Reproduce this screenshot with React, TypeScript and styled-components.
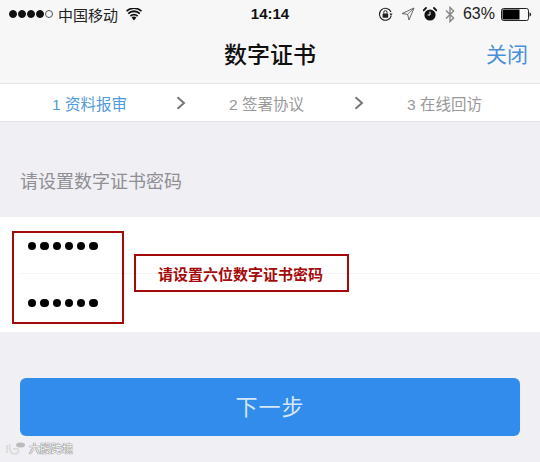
import React from "react";
import styled, { createGlobalStyle } from "styled-components";

const Global = createGlobalStyle`
  html, body { margin: 0; padding: 0; }
  body { width: 540px; height: 462px; overflow: hidden; background: #efeff4; font-family: "Liberation Sans", "Noto Sans CJK SC", sans-serif; }
`;
const Page = styled.div`
  position: relative; width: 540px; height: 462px; background: #efeff4; overflow: hidden;
  display: flex; flex-direction: column;
`;
const Header = styled.header`
  height: 83px; background: #f7f7f8; border-bottom: 1px solid #e4e4e6; display: flex; flex-direction: column; flex: none;
`;
const StatusBar = styled.div`
  position: relative; height: 28px; display: flex; align-items: center; justify-content: space-between;
  padding: 0 8px 0 9px; font-size: 15px; color: #222; flex: none;
`;
const StatusLeft = styled.div`display: flex; align-items: center;`;
const StatusRight = styled.div`display: flex; align-items: center; gap: 8px;`;
const SignalDots = styled.div`display: flex; gap: 1px; margin-right: 5px;`;
const SignalDot = styled.span<{ $on: boolean }>`
  width: 8px; height: 8px; box-sizing: border-box; border-radius: 50%;
  background: ${(p) => (p.$on ? "#111" : "transparent")}; border: 1px solid ${(p) => (p.$on ? "#111" : "#555")};
`;
const Clock = styled.div`
  position: absolute; left: 0; right: 0; top: 5px; text-align: center; font-size: 15px; font-weight: 700; color: #111; line-height: 18px;
`;
const Percent = styled.span`font-size: 16px; margin-right: -2px;`;
const NavBar = styled.div`
  flex: 1; display: flex; align-items: center; justify-content: center; position: relative; padding-bottom: 6px;
`;
const Title = styled.div`font-size: 23px; color: #111; font-weight: 500;`;
const Close = styled.div`position: absolute; right: 12px; top: 13px; font-size: 21px; line-height: 28px; color: #4a90d9;`;
const Steps = styled.nav`
  height: 38px; background: #fff; border-bottom: 1px solid #e2e2e6; display: flex; align-items: center; flex: none; box-sizing: border-box; padding-left: 52px;
`;
const Step = styled.span<{ $active?: boolean; $w: number }>`
  font-size: 15.5px; width: ${(p) => p.$w}px; flex: none; color: ${(p) => (p.$active ? "#4f9bdc" : "#999")}; white-space: nowrap;
`;
const Chevron = styled.svg`flex: none; width: 10px; height: 14px; display: block; margin-right: 43px;`;
const Prompt = styled.div`
  height: 95px; box-sizing: border-box; padding: 48px 0 0 20px; font-size: 18px; line-height: 24px; color: #8e8e93; flex: none;
`;
const Form = styled.div`background: #fff; height: 115px; flex: none; display: flex; flex-direction: column;`;
const FirstRow = styled.div`
  height: 57px; box-sizing: border-box; margin-left: 20px; padding: 25px 0 0 8px; border-bottom: 1px solid #f3f3f5; display: flex; gap: 4px;
`;
const SecondRow = styled.div`
  height: 58px; box-sizing: border-box; margin-left: 20px; padding: 25px 0 0 8px; display: flex; gap: 4px;
`;
const PwDot = styled.span`width: 8.3px; height: 8.3px; border-radius: 50%; background: #000; flex: none;`;
const NextButton = styled.button`
  margin: 46px 0 0 20px; width: 500px; height: 58px; border: 0; border-radius: 6px; background: #318ceb; color: #d5e6f8;
  font-family: inherit; font-size: 22px; letter-spacing: 1px; flex: none; padding: 0 0 4px;
`;
const MarkBoxLeft = styled.div`
  position: absolute; left: 12px; top: 231px; width: 112px; height: 93px; box-sizing: border-box; border: 2px solid #a50a0a;
`;
const MarkBoxRight = styled.div`
  position: absolute; left: 134px; top: 254px; width: 215px; height: 38px; box-sizing: border-box; border: 2px solid #a50a0a;
  display: flex; align-items: center; justify-content: center; color: #a50a0a;
  font-family: "Noto Sans CJK SC", serif; font-size: 15px; font-weight: 700; padding-right: 2px;
`;
const Watermark = styled.div`
  position: absolute; left: 6px; top: 442px; display: flex; align-items: center; gap: 3px; color: #fff; font-size: 11px; line-height: 14px;
  text-shadow: 0 0 1px #777, 0 0 1px #777, 0 0 1px #777;
`;

const Wifi = () => (
  <svg width="16" height="13" viewBox="0 0 16 13" style={{ marginLeft: 8 }}>
    <path d="M8 12.5 5.6 9.6a3.4 3.4 0 0 1 4.8 0Z" fill="#111" />
    <path d="M3.8 7.5a6 6 0 0 1 8.4 0l-1.1 1.3a4.4 4.4 0 0 0-6.2 0Z" fill="#111" />
    <path d="M1.6 4.9a9.2 9.2 0 0 1 12.8 0l-1.2 1.4a7.4 7.4 0 0 0-10.4 0Z" fill="#111" />
    <path d="M0 2.6a11.6 11.6 0 0 1 16 0l-1 1.2A10 10 0 0 0 1 3.8Z" fill="#111" />
  </svg>
);
const RotationLock = () => (
  <svg width="15" height="15" viewBox="0 0 15 15">
    <path d="M13.3 8.6A6 6 0 1 1 13 5" fill="none" stroke="#222" strokeWidth="1.1" />
    <path d="M11.4 6.6h3.2L13 8.8Z" fill="#222" />
    <rect x="4.6" y="6.5" width="5.6" height="4.2" rx="0.6" fill="#222" />
    <path d="M5.8 6.5V5.2a1.6 1.6 0 0 1 3.2 0v1.3" fill="none" stroke="#222" strokeWidth="1" />
  </svg>
);
const Location = () => (
  <svg width="14" height="14" viewBox="0 0 14 14">
    <path d="M13 1 1 6.6l5.6.7L8 13Z" fill="none" stroke="#666" strokeWidth="1" strokeLinejoin="round" />
    <path d="M13 1 6.6 7.3" stroke="#666" strokeWidth="0.8" />
  </svg>
);
const Alarm = () => (
  <svg width="14" height="14" viewBox="0 0 14 14">
    <circle cx="7" cy="8" r="5.6" fill="#111" />
    <path d="M7 4.6V8H4.6" fill="none" stroke="#fff" strokeWidth="1" />
    <path d="M.6 3.4 3 1M13.4 3.4 11 1" stroke="#111" strokeWidth="1.8" strokeLinecap="round" />
  </svg>
);
const Bluetooth = () => (
  <svg width="10" height="17" viewBox="0 0 10 17">
    <path d="M1 4.5 8.6 12 5 15.6V1.4L8.6 5 1 12.5" fill="none" stroke="#888" strokeWidth="1.4" />
  </svg>
);
const Battery = () => (
  <svg width="31" height="13" viewBox="0 0 31 13">
    <rect x="0.5" y="0.5" width="27" height="12" rx="2" fill="none" stroke="#222" />
    <rect x="1.5" y="1.5" width="17" height="10" fill="#000" />
    <path d="M28.5 4.5a1.6 2 0 0 1 0 4Z" fill="#222" />
  </svg>
);
const Arrow = () => (
  <Chevron viewBox="0 0 10 14">
    <path d="M1.5 1.2 8 7l-6.5 5.8" fill="none" stroke="#777" strokeWidth="2" />
  </Chevron>
);
const Logo = () => (
  <svg width="20" height="14" viewBox="0 0 20 14">
    <path d="M1 3v8M4 2c-1 5 0 10 5 10 3 0 4-3 3-5H7" fill="none" stroke="#ddd" strokeWidth="2" />
    <ellipse cx="14.5" cy="3" rx="4.5" ry="2.5" fill="#bbb" />
  </svg>
);
const Dots = () => (
  <>
    {[0, 1, 2, 3, 4, 5].map((i) => (
      <PwDot key={i} />
    ))}
  </>
);

export default function App() {
  return (
    <Page>
      <Global />
      <Header>
        <StatusBar>
          <StatusLeft>
            <SignalDots>
              {[1, 1, 1, 1, 0].map((on, i) => (
                <SignalDot key={i} $on={!!on} />
              ))}
            </SignalDots>
            中国移动
            <Wifi />
          </StatusLeft>
          <Clock>14:14</Clock>
          <StatusRight>
            <RotationLock />
            <Location />
            <Alarm />
            <Bluetooth />
            <Percent>63%</Percent>
            <Battery />
          </StatusRight>
        </StatusBar>
        <NavBar>
          <Title>数字证书</Title>
          <Close>关闭</Close>
        </NavBar>
      </Header>
      <Steps>
        <Step $active $w={124}>1 资料报审</Step>
        <Arrow />
        <Step $w={125}>2 签署协议</Step>
        <Arrow />
        <Step $w={90}>3 在线回访</Step>
      </Steps>
      <Prompt>请设置数字证书密码</Prompt>
      <Form>
        <FirstRow><Dots /></FirstRow>
        <SecondRow><Dots /></SecondRow>
      </Form>
      <NextButton>下一步</NextButton>
      <MarkBoxLeft />
      <MarkBoxRight>请设置六位数字证书密码</MarkBoxRight>
      <Watermark>
        <Logo />
        六股跨境
      </Watermark>
    </Page>
  );
}
